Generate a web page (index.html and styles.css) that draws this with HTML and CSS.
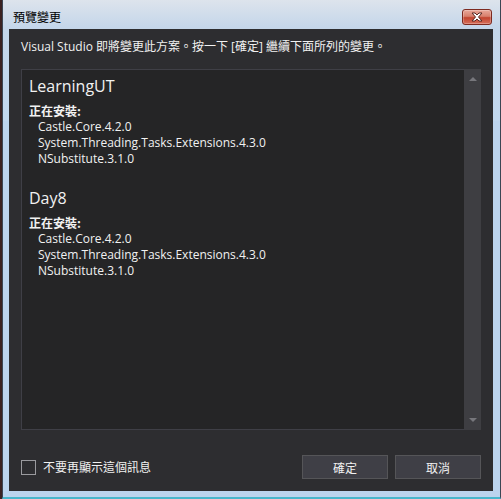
FILE: index.html
```html
<!DOCTYPE html>
<html>
<head>
<meta charset="utf-8">
<link rel="stylesheet" href="styles.css">
</head>
<body>
<div class="desk">
  <div class="window">
    <div class="titlebar">
      <span class="title">預覽變更</span>
      <button class="close" aria-label="close">
        <svg width="16" height="10" viewBox="0 0 16 10">
          <path d="M3 1 L6 1 L8 3 L10 1 L13 1 L9.5 5 L13 9 L10 9 L8 7 L6 9 L3 9 L6.5 5 Z" fill="#ffffff" stroke="#5a2a25" stroke-width="1" stroke-linejoin="round"/>
        </svg>
      </button>
    </div>
    <div class="client">
      <div class="intro">Visual Studio 即將變更此方案。按一下 [確定] 繼續下面所列的變更。</div>
      <div class="listbox">
        <div class="list">
          <div class="group">
            <div class="proj">LearningUT</div>
            <div class="label">正在安裝:</div>
            <div class="item">Castle.Core.4.2.0</div>
            <div class="item">System.Threading.Tasks.Extensions.4.3.0</div>
            <div class="item">NSubstitute.3.1.0</div>
          </div>
          <div class="group">
            <div class="proj">Day8</div>
            <div class="label">正在安裝:</div>
            <div class="item">Castle.Core.4.2.0</div>
            <div class="item">System.Threading.Tasks.Extensions.4.3.0</div>
            <div class="item">NSubstitute.3.1.0</div>
          </div>
        </div>
        <div class="scrollbar">
          <span class="arrow up"></span>
          <span class="arrow down"></span>
        </div>
      </div>
      <div class="footer">
        <label class="check"><span class="box"></span><span class="check-text">不要再顯示這個訊息</span></label>
        <div class="buttons">
          <button class="btn">確定</button>
          <button class="btn">取消</button>
        </div>
      </div>
    </div>
  </div>
</div>
</body>
</html>
```

FILE: styles.css
```css
html, body {
  margin: 0;
  padding: 0;
  background: #2a1b1b;
}
body {
  width: 501px;
  height: 499px;
  overflow: hidden;
  font-family: "Open Sans", "Noto Sans CJK TC", sans-serif;
}
.desk {
  width: 501px;
  height: 499px;
  padding-left: 2px;
  box-sizing: border-box;
  background: #3a2222;
}
.window {
  width: 499px;
  height: 499px;
  box-sizing: border-box;
  border-left: 1px solid #3b4654;
  border-right: 1px solid #3b4654;
  border-bottom: 2px solid #49b6cc;
  background: linear-gradient(to bottom, #dde4ec 0px, #c4d6ea 28px, #c2d8ef 120px, #bcd4ee 121px, #bcd4ee 100%);
  display: flex;
  flex-direction: column;
}
.titlebar {
  height: 29px;
  display: flex;
  align-items: flex-start;
  padding-left: 10px;
  padding-right: 8px;
  box-sizing: border-box;
}
.title {
  font-family: "Noto Sans CJK TC", sans-serif;
  font-size: 12px;
  line-height: 16px;
  color: #000;
  margin-top: 9px;
}
.close {
  margin-left: auto;
  margin-top: 9px;
  width: 30px;
  height: 16px;
  padding: 0;
  border: 1px solid #7d2a20;
  border-radius: 3px;
  background: linear-gradient(to bottom, #e9a89a 0%, #d8806d 45%, #c2442f 55%, #d6705c 100%);
  display: flex;
  align-items: center;
  justify-content: center;
  box-shadow: inset 0 0 0 1px rgba(255,255,255,0.25);
}
.close svg {
  display: block;
}
.client {
  margin-left: 6px;
  width: 484px;
  height: 462px;
  background: #2d2d30;
  box-sizing: border-box;
  padding: 10px 12px 12px 12px;
  display: flex;
  flex-direction: column;
  color: #f1f1f1;
}
.intro {
  font-size: 12px;
  line-height: 16px;
  white-space: nowrap;
}
.listbox {
  margin-top: 14px;
  flex: 1;
  display: flex;
  border: 1px solid #3f3f46;
  background: #252526;
}
.list {
  flex: 1;
  padding: 5px 7px;
}
.group {
  margin-bottom: 20px;
}
.proj {
  font-size: 16px;
  line-height: 22px;
}
.label {
  margin-top: 6px;
  font-family: "Noto Sans CJK TC", sans-serif;
  font-weight: bold;
  font-size: 12px;
  line-height: 16px;
}
.item {
  padding-left: 9px;
  font-size: 12px;
  line-height: 16px;
}
.scrollbar {
  width: 17px;
  margin: -1px -1px -1px 0;
  background: #3e3e42;
  display: flex;
  flex-direction: column;
  justify-content: space-between;
  align-items: center;
  padding: 8px 0 8px 0;
}
.arrow {
  width: 0;
  height: 0;
  border-left: 4.5px solid transparent;
  border-right: 4.5px solid transparent;
}
.arrow.up {
  border-bottom: 4px solid #77777c;
}
.arrow.down {
  border-top: 4px solid #77777c;
}
.footer {
  margin-top: 25px;
  height: 24px;
  display: flex;
  align-items: center;
}
.check {
  display: flex;
  align-items: center;
}
.box {
  width: 13px;
  height: 13px;
  border: 1px solid #9a9a9e;
  background: #2d2d30;
}
.check-text {
  margin-left: 7px;
  font-family: "Noto Sans CJK TC", sans-serif;
  font-size: 12px;
  line-height: 16px;
  color: #f1f1f1;
}
.buttons {
  margin-left: auto;
  display: flex;
  gap: 7px;
}
.btn {
  width: 86px;
  height: 24px;
  background: #3f3f46;
  border: 1px solid #555558;
  color: #f1f1f1;
  font-family: "Noto Sans CJK TC", sans-serif;
  font-size: 12px;
  padding: 0;
}
```
